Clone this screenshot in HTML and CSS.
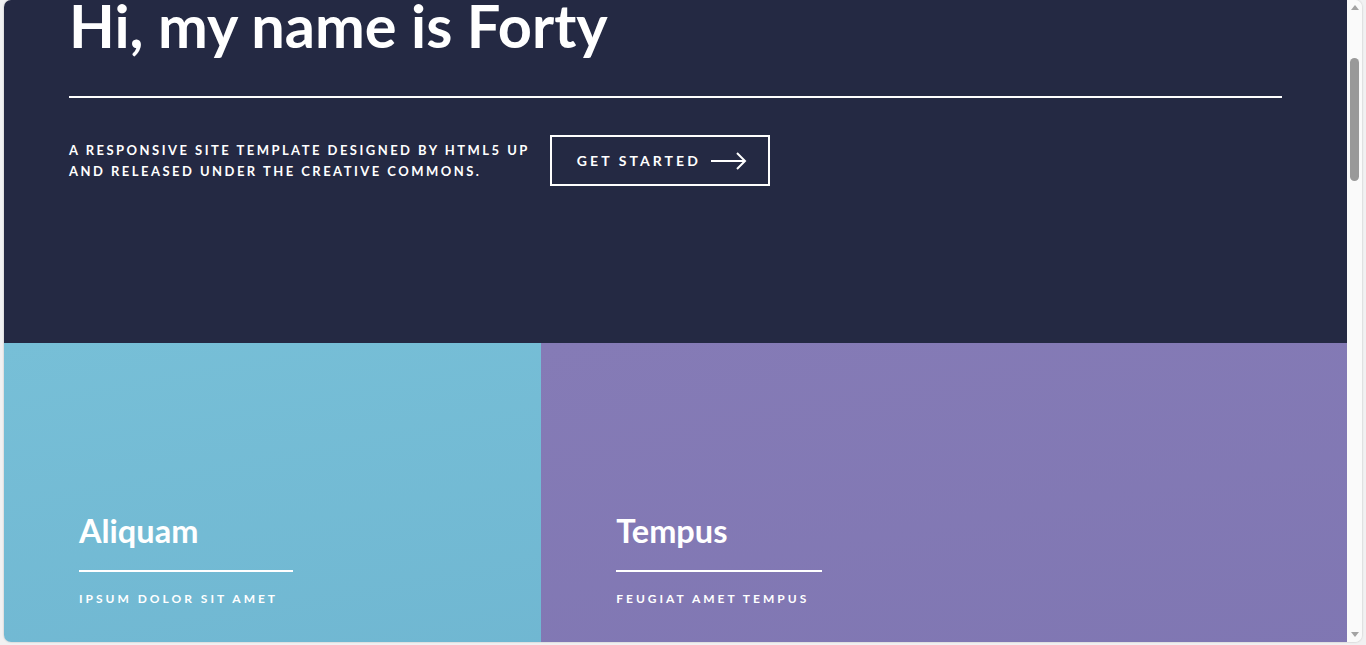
FILE: index.html
```html
<!DOCTYPE html>
<html lang="en">
<head>
<meta charset="utf-8">
<title>Forty by HTML5 UP</title>
<link rel="stylesheet" href="styles.css">
</head>
<body>
<div class="window">
<div class="frame" id="frame">
  <header class="topbar">
    <a class="logo" href="#"><strong>Forty</strong> <span>by HTML5 UP</span></a>
    <a class="menu" href="#">Menu</a>
  </header>

  <section class="banner">
    <div class="banner-inner">
      <header class="banner-head">
        <h1>Hi, my name is Forty</h1>
      </header>
      <div class="banner-row">
        <p class="banner-text">A responsive site template designed by HTML5 UP<br>and released under the Creative Commons.</p>
        <a class="btn" href="#">Get Started
          <svg class="arrow" width="36" height="18" viewBox="0 0 36 18" aria-hidden="true">
            <path d="M0 9 H34 M26 1 L34 9 L26 17" fill="none" stroke="#fff" stroke-width="2"/>
          </svg>
        </a>
      </div>
    </div>
  </section>

  <section class="tiles">
    <article class="tile tile-blue narrow">
      <header class="tile-head"><h3>Aliquam</h3></header>
      <p>Ipsum dolor sit amet</p>
    </article>
    <article class="tile tile-purple wide">
      <header class="tile-head"><h3>Tempus</h3></header>
      <p>feugiat amet tempus</p>
    </article>
    <article class="tile tile-coral wide">
      <header class="tile-head"><h3>Magna</h3></header>
      <p>Lorem etiam nullam</p>
    </article>
    <article class="tile tile-teal narrow">
      <header class="tile-head"><h3>Ipsum</h3></header>
      <p>Nisl sed aliquam</p>
    </article>
    <article class="tile tile-gold narrow">
      <header class="tile-head"><h3>Consequat</h3></header>
      <p>Ipsum dolor sit amet</p>
    </article>
    <article class="tile tile-pink wide">
      <header class="tile-head"><h3>Etiam</h3></header>
      <p>Feugiat amet tempus</p>
    </article>
  </section>

  <section class="intro">
    <header class="tile-head"><h2>Massa libero</h2></header>
    <p>Nullam et orci eu lorem consequat tincidunt vivamus et sagittis libero. Mauris aliquet magna magna sed nunc rhoncus pharetra. Pellentesque condimentum sem. In efficitur ligula tate urna. Maecenas laoreet massa vel lacinia pellentesque lorem ipsum dolor.</p>
    <a class="btn" href="#">Get Started</a>
  </section>

  <section class="contact">
    <form class="contact-form">
      <label>Name<span class="field"></span></label>
      <label>Email<span class="field"></span></label>
      <label>Message<span class="field tall"></span></label>
    </form>
    <div class="contact-info">
      <p><strong>Email</strong><br>information@untitled.tld</p>
      <p><strong>Phone</strong><br>(000) 000-0000 x12387</p>
      <p><strong>Address</strong><br>1234 Somewhere Road #5432<br>Nashville, TN 00000<br>United States of America</p>
    </div>
  </section>

  <footer class="footer">
    <p>&copy; Untitled &middot; Design: HTML5 UP</p>
  </footer>
</div>
<div class="scrollbar" aria-hidden="true">
  <span class="sb-arrow up"></span>
  <div class="sb-track"><span class="sb-thumb"></span></div>
  <span class="sb-arrow down"></span>
</div>
</div>
<script src="script.js"></script>
</body>
</html>
```

FILE: styles.css
```css
* { box-sizing: border-box; }

html, body {
  margin: 0;
  padding: 0;
  height: 100%;
  overflow: hidden;
  background: #f1f1f2;
}

body {
  font-family: "Lato", "Open Sans", sans-serif;
  color: #fff;
}

.window {
  margin-left: 4px;
  width: 1358px;
  height: 642px;
  display: flex;
  border-radius: 7px;
  overflow: hidden;
  background: #fafafa;
  box-shadow: 0 0 2px rgba(0,0,0,0.25);
}

.frame {
  width: 1343px;
  height: 100%;
  overflow-y: scroll;
  overflow-x: hidden;
  scrollbar-width: none;
  background: #242943;
}

.frame::-webkit-scrollbar { display: none; }

/* drawn scrollbar */
.scrollbar {
  width: 15px;
  display: flex;
  flex-direction: column;
  background: #fafafa;
}

.sb-arrow {
  height: 15px;
  display: flex;
  align-items: center;
  justify-content: center;
}

.sb-arrow::before {
  content: "";
  width: 0;
  height: 0;
  border-left: 4px solid transparent;
  border-right: 4px solid transparent;
}

.sb-arrow.up::before { border-bottom: 5px solid #a3a3a3; }
.sb-arrow.down::before { border-top: 5px solid #a3a3a3; }

.sb-track {
  flex: 1;
  padding: 43px 3px 0;
}

.sb-thumb {
  display: block;
  width: 9px;
  height: 123px;
  border-radius: 5px;
  background: #999;
}

a { color: #fff; text-decoration: none; }

.topbar {
  height: 52px;
  background: #2a2f4a;
  display: flex;
  align-items: center;
  justify-content: space-between;
  padding: 0 24px;
  font-size: 13px;
  font-weight: 700;
  letter-spacing: 0.25em;
  text-transform: uppercase;
}

.logo strong {
  background: #fff;
  color: #242943;
  padding: 2px 6px;
}

.banner {
  background: #242943;
  padding: 164px 65px 157px;
}

.banner-head {
  padding-bottom: 38px;
  border-bottom: 2px solid #fff;
  margin-bottom: 37px;
}

.banner-head h1 {
  margin: 0;
  font-size: 59.5px;
  line-height: 66px;
  font-weight: 700;
}

.banner-row {
  display: flex;
  align-items: center;
  gap: 20px;
}

.banner-text {
  margin: 0;
  font-size: 13px;
  line-height: 21px;
  font-weight: 700;
  letter-spacing: 0.19em;
  text-transform: uppercase;
}

.btn {
  display: inline-flex;
  align-items: center;
  gap: 10px;
  height: 51px;
  padding: 0 21px 0 25px;
  border: 2px solid #fff;
  font-size: 14px;
  font-weight: 700;
  letter-spacing: 0.22em;
  text-transform: uppercase;
}

.arrow { display: block; }

.tiles {
  display: flex;
  flex-wrap: wrap;
}

.tile {
  height: 360px;
  padding: 40px 75px 96px;
  display: flex;
  flex-direction: column;
  justify-content: flex-end;
  align-items: flex-start;
}

.narrow { width: 40%; }
.wide { width: 60%; }

.tile-blue { background: linear-gradient(170deg, #77bfd7 0%, #6fb6d1 100%); }
.tile-purple { background: linear-gradient(170deg, #857bb6 0%, #7f76b2 100%); }
.tile-coral { background: #d98479; }
.tile-teal { background: #6cc4ad; }
.tile-gold { background: #d6b46a; }
.tile-pink { background: #c97fa5; }

.tile-head h3,
.tile-head h2 {
  display: inline-block;
  margin: 0 0 19px;
  padding: 0 95px 19px 0;
  border-bottom: 2px solid #fff;
  font-size: 32.5px;
  line-height: 40px;
  font-weight: 700;
}

.tile p {
  margin: 0;
  font-size: 12px;
  line-height: 16px;
  font-weight: 700;
  letter-spacing: 0.25em;
  text-transform: uppercase;
}

.intro {
  background: #2e3450;
  padding: 64px 65px;
  min-height: 420px;
}

.intro p {
  max-width: 900px;
  font-size: 16px;
  line-height: 1.65;
  color: rgba(255,255,255,0.8);
  margin: 0 0 32px;
}

.contact {
  background: #2a2f4a;
  padding: 64px 65px;
  display: flex;
  gap: 64px;
  min-height: 620px;
}

.contact-form {
  flex: 1;
  display: flex;
  flex-direction: column;
  gap: 20px;
}

.contact-form label {
  display: flex;
  flex-direction: column;
  gap: 8px;
  font-size: 13px;
  font-weight: 700;
  letter-spacing: 0.25em;
  text-transform: uppercase;
}

.field {
  display: block;
  height: 44px;
  background: rgba(212,212,255,0.035);
}

.field.tall { height: 180px; }

.contact-info {
  flex: 1;
  font-size: 15px;
  line-height: 1.6;
  color: rgba(255,255,255,0.8);
}

.footer {
  background: #242943;
  padding: 40px 65px;
  min-height: 32px;
  font-size: 13px;
  color: rgba(255,255,255,0.6);
}

.footer p { margin: 0; }
```

FILE: script.js
```js
document.getElementById('frame').scrollTop = 224;
```
